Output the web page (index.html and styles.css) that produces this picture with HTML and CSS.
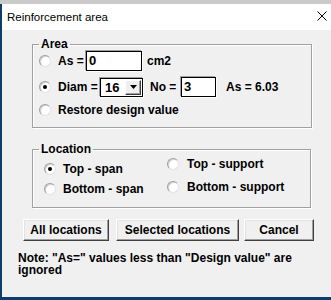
FILE: index.html
```html
<!DOCTYPE html>
<html>
<head>
<meta charset="utf-8">
<link rel="stylesheet" href="styles.css">
</head>
<body>
<div class="topstrip"></div>
<div class="window">
  <div class="titlebar">
    <span class="title">Reinforcement area</span>
    <svg class="close" width="10" height="10" viewBox="0 0 10 10"><path d="M0.5 0.5 L9.5 9.5 M9.5 0.5 L0.5 9.5" stroke="#000" stroke-width="1" fill="none"/></svg>
  </div>
  <div class="content">
    <fieldset class="group area">
      <legend>Area</legend>
      <div class="row r1">
        <span class="radio"></span>
        <span class="lbl w-as">As =</span>
        <span class="input in-as">0</span>
        <span class="lbl unit">cm2</span>
      </div>
      <div class="row r2">
        <span class="radio checked"></span>
        <span class="lbl w-diam">Diam =</span>
        <span class="combo"><span class="combo-val">16</span><span class="combo-btn"><svg width="7" height="4" viewBox="0 0 7 4"><path d="M0 0 H7 L3.5 4 Z" fill="#000"/></svg></span></span>
        <span class="lbl w-no">No =</span>
        <span class="input in-no">3</span>
        <span class="lbl result">As = 6.03</span>
      </div>
      <div class="row r3">
        <span class="radio"></span>
        <span class="lbl">Restore design value</span>
      </div>
    </fieldset>
    <fieldset class="group location">
      <legend>Location</legend>
      <div class="loc-grid">
        <div class="loc-col left">
          <div class="row small"><span class="radio checked"></span><span class="lbl">Top - span</span></div>
          <div class="row small"><span class="radio"></span><span class="lbl">Bottom - span</span></div>
        </div>
        <div class="loc-col right">
          <div class="row small"><span class="radio"></span><span class="lbl">Top - support</span></div>
          <div class="row small"><span class="radio"></span><span class="lbl">Bottom - support</span></div>
        </div>
      </div>
    </fieldset>
    <div class="buttons">
      <button class="btn b-all">All locations</button>
      <button class="btn b-sel">Selected locations</button>
      <button class="btn b-cancel">Cancel</button>
    </div>
    <p class="note">Note: "As=" values less than "Design value" are ignored</p>
  </div>
</div>
</body>
</html>
```
FILE: styles.css
```css
html, body {
  margin: 0;
  padding: 0;
}
body {
  width: 331px;
  height: 300px;
  overflow: hidden;
  background: #0f3c68;
  font-family: "Liberation Sans", Arial, sans-serif;
  font-size: 12px;
  font-weight: bold;
  color: #000;
}
.topstrip {
  height: 4px;
  background: #cbcbcb;
}
.window {
  margin-left: 2px;
  height: 293px;
  background: #f0f0f0;
  display: flex;
  flex-direction: column;
}
.titlebar {
  height: 26px;
  background: #fff;
  display: flex;
  align-items: center;
  padding: 0 4px 0 5px;
}
.title {
  font-weight: normal;
  font-size: 11.5px;
  flex: 1;
}
.close {
  display: block;
  margin-top: -2px;
}
.content {
  padding: 8px 0 0 16px;
}
.group {
  margin: 0 0 0 14px;
  padding: 0 0 0 6px;
  border: 1px solid #a0a0a0;
  box-shadow: 1px 1px 0 #fff, inset 1px 1px 0 #fff;
  box-sizing: border-box;
  min-width: 0;
}
.group legend {
  padding: 0 2px;
  line-height: 13px;
  font-weight: bold;
}
.area {
  width: 280px;
  padding-bottom: 10px;
}
.location {
  width: 279px;
  margin-top: 15px;
  padding-bottom: 11px;
}
.row {
  display: flex;
  align-items: center;
  height: 20px;
  white-space: nowrap;
}
.row > * { flex: none; }
.r2 { margin-top: 6px; }
.r3 { margin-top: 6px; height: 14px; }
.radio {
  width: 12px;
  height: 12px;
  box-sizing: border-box;
  border-radius: 50%;
  background: #fff;
  border: 1px solid;
  border-color: #a0a0a0 #e3e3e3 #e3e3e3 #a0a0a0;
  box-shadow: inset 1px 1px 0 #d0d0d0;
  display: flex;
  align-items: center;
  justify-content: center;
}
.radio.checked::after {
  content: "";
  width: 4px;
  height: 4px;
  border-radius: 50%;
  background: #000;
}
.lbl { margin-left: 7px; }
.w-as { width: 28px; }
.w-diam { width: 42px; }
.unit { margin-left: 5px; }
.w-no { width: 31px; }
.result { margin-left: 10px; }
.input {
  height: 20px;
  box-sizing: border-box;
  background: #fff;
  border: 1px solid #000;
  box-shadow: -1px -1px 0 #a0a0a0, 1px 1px 0 #fff;
  padding: 0 0 0 2px;
  line-height: 17px;
  font-size: 13px;
}
.in-as { width: 56px; }
.in-no { width: 35px; }
.combo {
  width: 43px;
  height: 19px;
  box-sizing: border-box;
  background: #fff;
  border: 1px solid #000;
  box-shadow: -1px -1px 0 #a0a0a0, 1px 1px 0 #fff;
  display: flex;
  align-items: center;
  justify-content: space-between;
  padding: 0 1px 0 4px;
}
.combo-val { font-size: 13px; }
.combo-btn {
  width: 16px;
  height: 15px;
  box-sizing: border-box;
  background: #f0f0f0;
  border: 1px solid;
  border-color: #fff #404040 #404040 #fff;
  box-shadow: inset -1px -1px 0 #a0a0a0;
  display: flex;
  align-items: center;
  justify-content: center;
}
.combo-btn svg { display: block; }
.loc-grid {
  display: grid;
  grid-template-columns: 128px 1fr;
}
.loc-col {
  display: flex;
  flex-direction: column;
}
.loc-col.left { padding: 6px 0 0 5px; gap: 6px; }
.loc-col.right { padding-top: 1px; gap: 9px; }
.row.small { height: 14px; }
.right .lbl { margin-left: 8px; }
.buttons {
  display: flex;
  margin-top: 11px;
  padding-left: 5px;
}
.btn {
  height: 22px;
  box-sizing: border-box;
  background: #f0f0f0;
  border: 1px solid;
  border-color: #fff #404040 #404040 #fff;
  box-shadow: inset -1px -1px 0 #a0a0a0, inset 1px 1px 0 #e3e3e3;
  font-family: inherit;
  font-size: 12px;
  font-weight: bold;
  color: #000;
  padding: 0;
  margin: 0;
}
.b-all { width: 86px; }
.b-sel { width: 123px; margin-left: 7px; }
.b-cancel { width: 70px; margin-left: 5px; }
.note {
  margin: 11px 0 0 0;
  width: 300px;
  line-height: 12px;
}
```
